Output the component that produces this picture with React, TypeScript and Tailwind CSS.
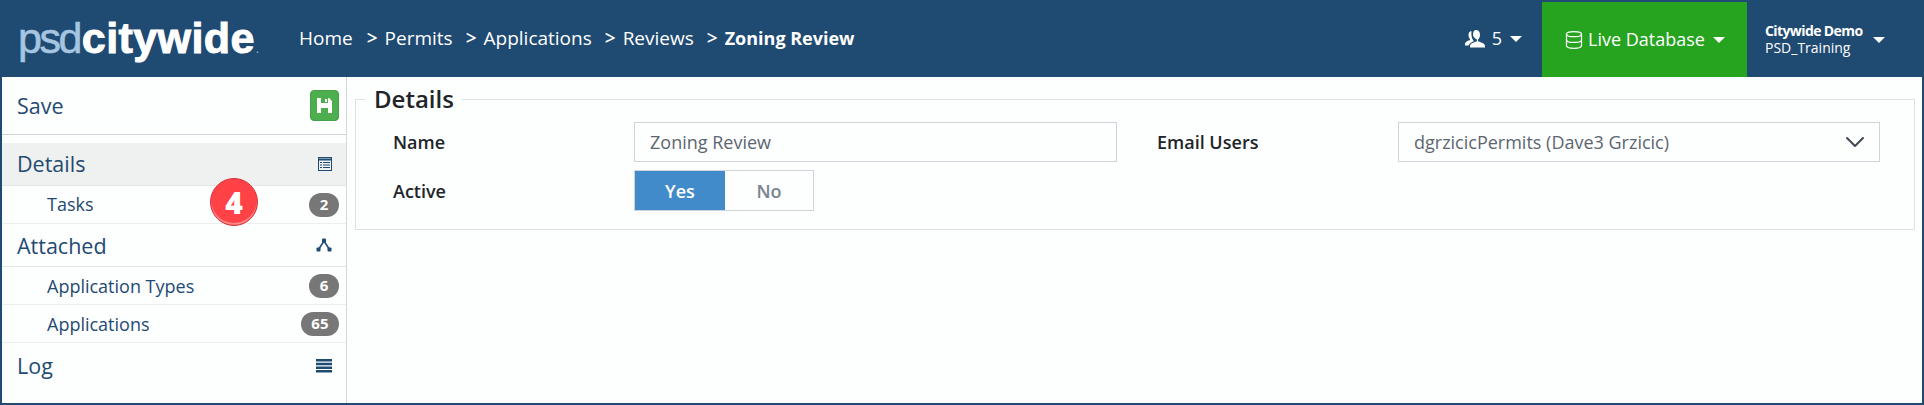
import { ChevronDown, Database } from "lucide-react";

function Caret() {
  return <span className="ml-[8px] inline-block h-0 w-0 border-x-[6px] border-t-[6px] border-x-transparent border-t-white" />;
}

function Badge({ value }: { value: string }) {
  return (
    <span className="flex h-[24px] min-w-[30px] items-center justify-center rounded-full bg-[#777777] px-[10.5px] text-[15px] font-bold text-white">
      {value}
    </span>
  );
}

function SubRow({ label, value, flush }: { label: string; value: string; flush?: boolean }) {
  return (
    <div className="flex h-[38px] items-center justify-between border-b border-[#eceeee] pl-[45px] pr-[7px] text-[18px] text-[#1f4a72]">
      <span className={flush ? "" : "pt-[2px]"}>{label}</span>
      <Badge value={value} />
    </div>
  );
}

function HeadRow({ label, icon, active }: { label: string; icon: React.ReactNode; active?: boolean }) {
  return (
    <div
      className={`flex h-[43px] items-center justify-between border-b border-[#e4e6e6] pl-[15px] pr-[14px] text-[21.5px] text-[#1f4a72] ${active ? "bg-[#eff0f0]" : ""}`}
    >
      <span className={active ? "" : "pt-[2px]"}>{label}</span>
      {icon}
    </div>
  );
}

function Sidebar() {
  return (
    <aside className="relative w-[345px] shrink-0 border-r border-[#d4d6d8]">
      <div className="flex h-[58px] items-center justify-between border-b border-[#ced4da] pl-[15px] pr-[7px] text-[21.5px] text-[#1f4a72]">
        <span className="pt-[2px]">Save</span>
        <span className="flex h-[31px] w-[29px] items-center justify-center rounded-[4px] border border-[#45a049] bg-[#4cae4c]">
          <svg width="15" height="15" viewBox="0 0 15 15">
            <path d="M0 0h12l3 3v12H0z" fill="#fff" />
            <path d="M4 0h7v5H4zM4 10h7v5H4z" fill="#4cae4c" />
            <path d="M8 1h2v3H8z" fill="#fff" />
          </svg>
        </span>
      </div>
      <div className="h-[8px]" />
      <HeadRow
        label="Details"
        active
        icon={
          <svg width="14" height="14" viewBox="0 0 14 14" fill="none" stroke="#1f4a72">
            <rect x="0.5" y="0.5" width="13" height="13" strokeWidth="1" />
            <path d="M0 2.500h14" strokeWidth="2" />
            <path d="M2 5.500h2M5 5.500h7M2 8h2M5 8h7M2 10.500h2M5 10.500h7" strokeWidth="1.2" />
          </svg>
        }
      />
      <SubRow label="Tasks" value="2" flush />
      <HeadRow
        label="Attached"
        icon={
          <svg width="16" height="14" viewBox="0 0 16 14" fill="#1f4a72">
            <path d="M8 3L2.500 11.500M8 3l5.500 8.500" stroke="#1f4a72" strokeWidth="1.5" fill="none" />
            <rect x="6" y="0.5" width="4" height="4" rx="1" />
            <rect x="0.5" y="9.5" width="4" height="4" rx="1" />
            <rect x="11.5" y="9.5" width="4" height="4" rx="1" />
          </svg>
        }
      />
      <SubRow label="Application Types" value="6" />
      <SubRow label="Applications" value="65" />
      <div className="flex h-[45px] items-center justify-between pl-[15px] pr-[14px] text-[21.5px] text-[#1f4a72]">
        <span className="pt-[2px]">Log</span>
        <svg width="16" height="14" viewBox="0 0 16 14" fill="#1f4a72">
          <path d="M0 0h16v2.500H0zM0 3.700h16v2.500H0zM0 7.400h16v2.500H0zM0 11.100h16v2.500H0z" />
        </svg>
      </div>
      <span className="absolute left-[208px] top-[101px] flex h-[48px] w-[48px] items-center justify-center rounded-full border border-[#d9343a] bg-[#ff4245] text-[30px] font-extrabold text-white shadow-[inset_0_-2px_0_#ff8a8c]">
        4
      </span>
    </aside>
  );
}

export default function App() {
  return (
    <div className="flex h-[405px] w-full flex-col overflow-hidden bg-[#1f4a72] font-['Open_Sans',sans-serif]">
      <header className="flex h-[77px] shrink-0 items-center text-white">
        <div className="ml-[18px] flex w-[281px] shrink-0 items-baseline font-['Liberation_Sans',sans-serif] text-[43px] leading-none">
          <span className="tracking-[-2.5px] text-[#a5c5e0] [-webkit-text-stroke:0.6px_#a5c5e0]">psd</span>
          <span className="ml-[2px] font-bold tracking-[0.4px] text-white [-webkit-text-stroke:1px_#fff]">citywide</span>
          <span className="ml-[1px] text-[12px] text-[#a5c5e0]">.</span>
        </div>
        <nav className="flex items-center text-[19px]">
          <span>Home</span>
          <span className="ml-[14px] font-semibold">&gt;</span>
          <span className="ml-[7px]">Permits</span>
          <span className="ml-[13px] font-semibold">&gt;</span>
          <span className="ml-[7px]">Applications</span>
          <span className="ml-[13px] font-semibold">&gt;</span>
          <span className="ml-[7px]">Reviews</span>
          <span className="ml-[13px] font-semibold">&gt;</span>
          <span className="ml-[7px] text-[18px] font-bold">Zoning Review</span>
        </nav>
        <div className="ml-auto flex items-center text-[18px]">
          <svg width="21" height="19" viewBox="0 0 21 19" fill="#fff">
            <path d="M11 1c3 0 4 2.500 4 5 0 2-1 3.500-2 4.500v1.500c1 1 7 2 7 5v1.500H5V17c0-3 6-4 7-5v-1.500C10 9.500 8 8 8 5.500 8 3 9 1 11 1z" />
            <path d="M7 2C4.500 2 3.500 4 3.500 6c0 1.500.5 3 1.500 4v1c-1 .5-5 1.500-5 4v1.500h3.500c.5-2 3-3 5.500-4.500C7.500 10.500 6 8 6.500 2z" />
          </svg>
          <span className="ml-[6px]">5</span>
          <Caret />
        </div>
        <div className="ml-[20px] mt-[2px] flex h-[75px] w-[205px] items-center justify-center bg-[#26a31f] text-[18px]">
          <Database size={20} strokeWidth={1.5} className="mr-[4px]" />
          <span>Live Database</span>
          <Caret />
        </div>
        <div className="ml-[18px] flex w-[159px] items-center">
          <div className="text-[14px] leading-[17px]">
            <div className="font-bold tracking-[-0.6px]">Citywide Demo</div>
            <div>PSD_Training</div>
          </div>
          <span className="mb-[4px] ml-[2px]">
            <Caret />
          </span>
        </div>
      </header>
      <div className="mx-[2px] mb-[2px] flex flex-1 bg-[#fdfefe]">
        <Sidebar />
        <main className="flex-1 pl-[8px] pr-[7px]">
          <fieldset className="mt-[7px] h-[146px] border border-[#dfe1e3] pl-[10px]">
            <legend className="px-[8px] text-[24px] font-semibold leading-[30px] text-[#212529]">Details</legend>
            <div className="mt-[8px] flex pl-[1px] text-[18px]">
              <div className="w-[267px] pl-[26px]">
                <div className="flex h-[40px] items-center font-semibold text-[#212529]">Name</div>
                <div className="mt-[8px] flex h-[41px] items-center pt-[2px] font-semibold text-[#212529]">Active</div>
              </div>
              <div className="w-[483px]">
                <div className="flex h-[40px] items-center border border-[#ced4da] pl-[15px] text-[#5c6670]">Zoning Review</div>
                <div className="mt-[8px] flex h-[41px] w-[180px] border border-[#ced4da] font-semibold">
                  <span className="flex w-[90px] items-center justify-center bg-[#428bca] pt-[2px] text-white">Yes</span>
                  <span className="flex flex-1 items-center justify-center pt-[2px] text-[#7a8490]">No</span>
                </div>
              </div>
              <div className="flex h-[40px] w-[281px] items-center pl-[40px] font-semibold text-[#212529]">Email Users</div>
              <div className="flex h-[40px] w-[482px] items-center justify-between border border-[#ced4da] pl-[15px] pr-[8px] text-[#5c6670]">
                <span>dgrzicicPermits (Dave3 Grzicic)</span>
                <ChevronDown size={32} strokeWidth={1.5} className="text-[#3f4a55]" />
              </div>
            </div>
          </fieldset>
        </main>
      </div>
    </div>
  );
}
